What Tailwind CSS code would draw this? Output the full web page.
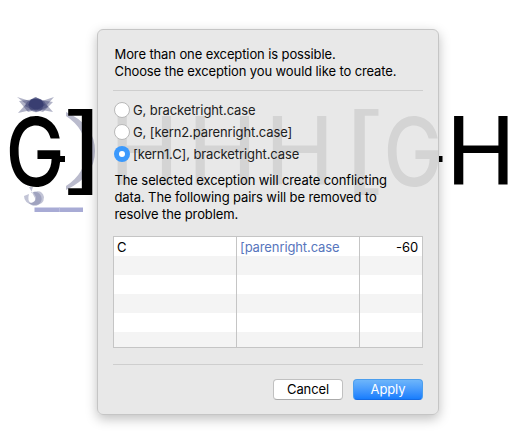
<!DOCTYPE html>
<html lang="en"><head><meta charset="utf-8"><title>Kerning exception</title>
<script src="https://cdn.jsdelivr.net/npm/@tailwindcss/browser@4"></script></head>
<body class="relative h-[441px] w-[524px] overflow-hidden bg-white font-['Inter',sans-serif] text-[13px] tracking-[-0.11px] text-black">
<!-- glyph canvas -->
<svg class="absolute inset-0 tracking-normal" width="524" height="441" viewBox="0 0 524 441">
  <path d="M66 112Q95 125 95 151Q95 176 66 190V186Q86 173 86 151Q86 129 66 116Z" fill="#babbcd"/>
  <g fill="#20265e" fill-opacity=".35">
    <path d="M17 97L30 101L36 97L42 101L54 97L47 105L53 112L36 109L18 113L26 104Z"/>
    <path d="M19 101L35 99L53 102L43 112L36 110L28 112Z"/>
    <path d="M27 102L35 97L44 101L48 107L36 112L25 106Z"/>
    <circle cx="36" cy="105" r="7.300"/>
    <path d="M31 99L41 99L45 105L36 111L28 105Z"/>
  </g>
  <g fill="#777da5" fill-opacity=".45"><path d="M29 187H33L31 193Q42 188 44 197Q44 206 33 205Q24 203 24 196L29 194Q27 201 31 203Q36 202 35 198Z"/><path d="M33 192A7 7 0 1 1 29 203Q36 203 36 197Z"/></g>
  <path d="M34.500 207.500H83V212H34.500Z" fill="#a8abd5"/><path d="M59.500 207.500V212" stroke="#bfc1e1" stroke-width=".7"/>
  <g font-family="Roboto, sans-serif" font-size="96" font-weight="400" fill="#000">
    <g font-family="Inter, sans-serif" font-size="94.500" font-weight="500">
      <text transform="translate(5.500 185.800) scale(.84 1)">G</text>
      <text transform="translate(383.500 185.800) scale(.84 1)">G</text>
    </g>
    <path d="M56 156H65V162H56ZM434 156H442.500V162H434Z"/>
    <text transform="translate(109.500 185.300) scale(1.02 1)">H</text>
    <text transform="translate(187.500 185.300) scale(1.02 1)">H</text>
    <text transform="translate(264.800 185.300) scale(1.02 1)">H</text>
    <text transform="translate(446 185.300) scale(1.02 1)">H</text>
    <g font-family="'DejaVu Sans Mono', monospace" font-size="95.500">
      <text transform="translate(48.500 182) scale(1.220 1)">]</text>
      <text transform="translate(328 182) scale(1.220 1)">[</text>
    </g>
  </g>
</svg>
<main class="absolute left-[97px] top-[29px] flex h-[386px] w-[342px] flex-col rounded-[6px] border border-[#c5c5c5] bg-[#e6e6e6]/92 px-[15px] pt-[16px] shadow-[0_4px_12px_rgba(0,0,0,0.25)]">
  <p class="whitespace-nowrap pl-[1.500px] leading-[17px]"><span>More than one exception is possible.</span><br><span>Choose the exception you would like to create.</span></p>
  <hr class="mt-[10px] border-t border-[#cecece]">
  <div class="mt-[11px] flex flex-col gap-[6px] whitespace-nowrap pl-px leading-4 tracking-[-0.1px] text-[#202020]">
    <label class="flex items-center gap-[3px]"><i class="size-4 shrink-0 rounded-full border border-[#b8b8b8] bg-white"></i>G, bracketright.case</label>
    <label class="flex items-center gap-[3px]"><i class="size-4 shrink-0 rounded-full border border-[#b8b8b8] bg-white"></i>G, [kern2.parenright.case]</label>
    <label class="flex items-center gap-[3px]"><i class="flex size-4 shrink-0 items-center justify-center rounded-full bg-[#3b99fc]"><b class="size-[6px] rounded-full bg-white"></b></i>[kern1.C], bracketright.case</label>
  </div>
  <p class="mt-[10px] whitespace-nowrap pl-[1.500px] leading-[17px]">The selected exception will create conflicting<br>data. The following pairs will be removed to<br>resolve the problem.</p>
  <div class="mt-[13px] grid h-[112px] w-[310px] grid-cols-[123px_123px_1fr] divide-x divide-[#c5c5c5] border border-[#c5c5c5] bg-[repeating-linear-gradient(#fff_0_19px,#f4f4f4_19px_38px)] leading-[21px]">
    <span class="pl-[3px]">C</span><span class="pl-[3px] text-[#5876bd]">[parenright.case</span><span class="pr-[4px] text-right">-60</span>
  </div>
  <hr class="mt-4 border-t border-[#cecece]">
  <div class="mt-[14px] flex justify-end gap-[10px] leading-[19px]">
    <button class="h-[21px] w-[70px] rounded-[4px] border border-[#c0c0c0] border-b-[#aaa] bg-white">Cancel</button>
    <button class="h-[21px] w-[70px] rounded-[4px] border border-[#4c9eed] border-b-[#146be5] bg-linear-to-b from-[#6db5fa] to-[#167dfd] text-white">Apply</button>
  </div>
</main>
</body></html>
